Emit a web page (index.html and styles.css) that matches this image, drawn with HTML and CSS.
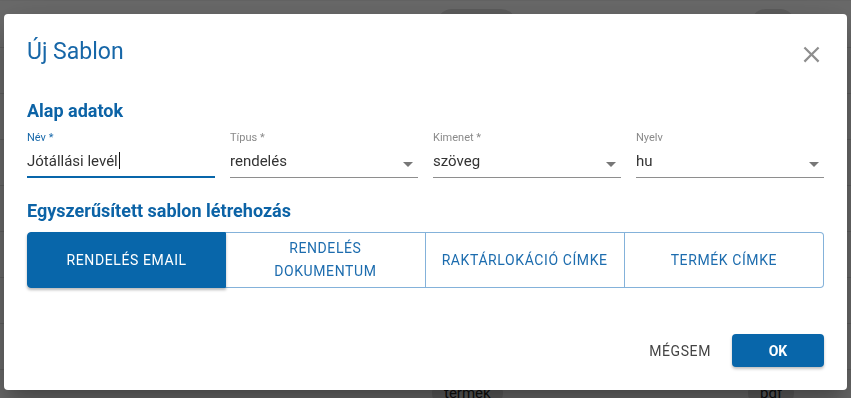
FILE: index.html
```html
<!DOCTYPE html>
<html lang="hu">
<head>
  <meta charset="UTF-8">
  <meta name="viewport" content="width=device-width, initial-scale=1.0">
  <title>Új Sablon</title>
  <link rel="stylesheet" href="styles.css">
</head>
<body>
<div class="page">
  <div class="row"><span></span><span class="chip">rendelés</span><span class="chip">pdf</span></div>
  <div class="row"></div>
  <div class="row"></div>
  <div class="row"></div>
  <div class="row"></div>
  <div class="row"></div>
  <div class="row"></div>
  <div class="row"></div>
  <div class="row"><span></span><span class="chip">termek</span><span class="chip">pdf</span></div>
</div>
<div class="scrim"></div>

<div class="dialog">
  <div class="dialog-head">
    <h2 class="dialog-title">Új Sablon</h2>
    <button class="close-btn" aria-label="Bezárás">
      <svg viewBox="0 0 24 24" width="27" height="27"><path d="M19 6.41 17.59 5 12 10.59 6.41 5 5 6.41 10.59 12 5 17.59 6.41 19 12 13.41 17.59 19 19 17.59 13.41 12z"/></svg>
    </button>
  </div>

  <div class="dialog-body">
    <h3 class="section-title">Alap adatok</h3>
    <div class="fields">
      <div class="field focused">
        <label>Név *</label>
        <div class="input">Jótállási levél<span class="caret"></span></div>
      </div>
      <div class="field">
        <label>Típus *</label>
        <div class="input">rendelés<span class="arrow"></span></div>
      </div>
      <div class="field">
        <label>Kimenet *</label>
        <div class="input">szöveg<span class="arrow"></span></div>
      </div>
      <div class="field">
        <label>Nyelv</label>
        <div class="input">hu<span class="arrow"></span></div>
      </div>
    </div>

    <h3 class="section-title second">Egyszerűsített sablon létrehozás</h3>
    <div class="btn-group">
      <button class="active">Rendelés email</button>
      <button>Rendelés<br>dokumentum</button>
      <button>Raktárlokáció címke</button>
      <button>Termék címke</button>
    </div>
  </div>

  <div class="dialog-actions">
    <button class="text-btn">Mégsem</button>
    <button class="primary-btn">OK</button>
  </div>
</div>
</body>
</html>
```

FILE: styles.css
```css
html, body {
  margin: 0;
  padding: 0;
  height: 100%;
  overflow: hidden;
}
body {
  font-family: Roboto, "Liberation Sans", sans-serif;
  background: #fff;
  color: #333;
}
button {
  font-family: inherit;
  cursor: pointer;
}

/* page behind the dialog */
.page {
  padding-top: 1px;
  border-top: 1px solid #f4f4f4;
}
.row {
  height: 45px;
  border-bottom: 1px solid #e2e2e2;
  display: grid;
  grid-template-columns: 436px 314px 1fr;
  align-items: center;
  justify-items: start;
}
.row:last-child {
  grid-template-columns: 432px 316px 1fr;
}
.chip {
  height: 32px;
  line-height: 32px;
  padding: 0 12px;
  border-radius: 16px;
  background: #e0e0e0;
  font-size: 15px;
  color: #222;
}
.scrim {
  position: fixed;
  inset: 0;
  background: rgba(0, 0, 0, 0.58);
}

/* dialog */
.dialog {
  position: absolute;
  left: 4px;
  top: 14px;
  width: 843px;
  height: 376px;
  background: #fff;
  border-radius: 4px;
  display: flex;
  flex-direction: column;
  box-shadow: 0 11px 15px -7px rgba(0,0,0,0.2), 0 24px 38px 3px rgba(0,0,0,0.14), 0 9px 46px 8px rgba(0,0,0,0.12);
}
.dialog-head {
  display: flex;
  justify-content: space-between;
  align-items: flex-start;
  padding: 22px 22px 0 23px;
}
.dialog-title {
  margin: 0;
  font-size: 23px;
  font-weight: 400;
  line-height: 32px;
  color: #1767a8;
}
.close-btn {
  background: none;
  border: 0;
  padding: 0;
  width: 27px;
  height: 27px;
  margin-top: 5px;
}
.close-btn svg {
  display: block;
  fill: #8e8e8e;
}
.dialog-body {
  padding: 0 23px;
}
.section-title {
  margin: 31px 0 0;
  font-size: 18px;
  font-weight: 700;
  line-height: 24px;
  color: #0c63a6;
}
.section-title.second {
  margin-top: 21px;
}

/* text fields */
.fields {
  display: grid;
  grid-template-columns: repeat(4, 1fr);
  gap: 15px;
  margin-top: 8px;
}
.field label {
  display: block;
  font-size: 11px;
  line-height: 14px;
  color: #8a8a8a;
}
.field.focused label {
  color: #1a6aab;
}
.input {
  position: relative;
  margin-top: 4px;
  height: 24px;
  padding-bottom: 4px;
  font-size: 15px;
  line-height: 24px;
  color: #333;
  border-bottom: 1px solid #8e8e8e;
}
.field.focused .input {
  padding-bottom: 3px;
  border-bottom: 2px solid #0866aa;
}
.caret {
  display: inline-block;
  width: 1px;
  height: 17px;
  margin-left: 1px;
  vertical-align: -3px;
  background: #111;
}
.arrow {
  position: absolute;
  right: 5px;
  top: 13px;
  border-left: 5px solid transparent;
  border-right: 5px solid transparent;
  border-top: 5px solid #777;
}

/* template button group */
.btn-group {
  display: grid;
  grid-template-columns: repeat(4, 1fr);
  height: 56px;
  margin-top: 9px;
}
.btn-group button {
  background: #fff;
  border: 1px solid #84b2da;
  border-left: none;
  color: #1c6cae;
  font-size: 14px;
  font-weight: 400;
  letter-spacing: 0.6px;
  line-height: 23px;
  text-transform: uppercase;
  padding: 0 14px;
}
.btn-group button:last-child {
  border-radius: 0 4px 4px 0;
}
.btn-group button.active {
  background: #0866aa;
  border: 1px solid #0866aa;
  border-radius: 4px 0 0 4px;
  color: #fff;
  box-shadow: 0 2px 3px rgba(0,0,0,0.28);
  position: relative;
}

/* footer */
.dialog-actions {
  margin-top: auto;
  display: flex;
  justify-content: flex-end;
  align-items: center;
  gap: 13px;
  padding: 0 23px 23px;
}
.text-btn {
  background: none;
  border: 0;
  height: 33px;
  padding: 0 8px;
  font-size: 14px;
  font-weight: 400;
  letter-spacing: 0.6px;
  color: #444;
  text-transform: uppercase;
}
.primary-btn {
  width: 92px;
  height: 33px;
  border: 0;
  border-radius: 4px;
  background: #0866aa;
  color: #fff;
  font-size: 14px;
  font-weight: 700;
  box-shadow: 0 2px 3px rgba(0,0,0,0.25);
}
```
